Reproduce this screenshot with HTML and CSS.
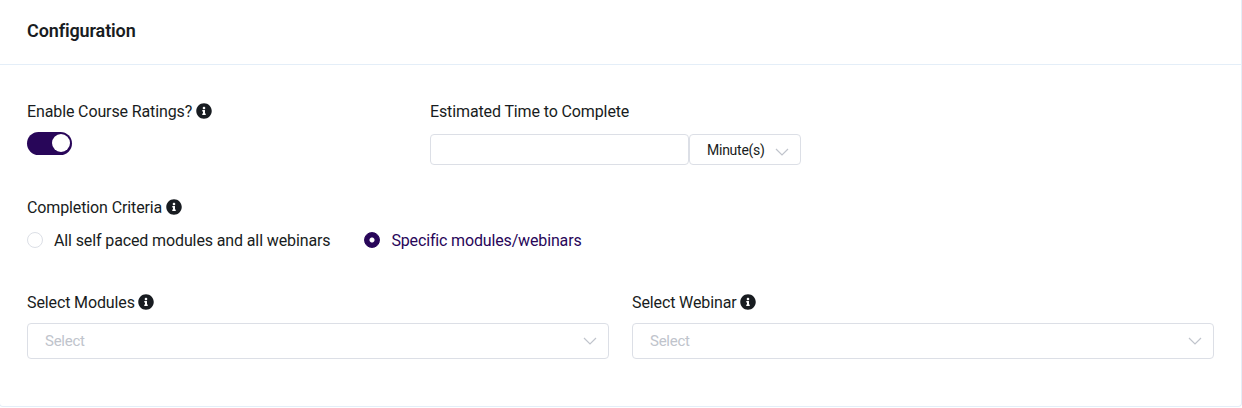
FILE: index.html
```html
<!DOCTYPE html>
<html lang="en">
<head>
  <meta charset="UTF-8">
  <meta name="viewport" content="width=device-width, initial-scale=1.0">
  <title>Configuration</title>
  <link rel="stylesheet" href="styles.css">
</head>
<body>
  <svg class="sprite">
    <symbol id="info" viewBox="0 0 512 512">
      <path d="M256 8C119.043 8 8 119.083 8 256c0 136.997 111.043 248 248 248s248-111.003 248-248C504 119.083 392.957 8 256 8zm0 110c23.196 0 42 18.804 42 42s-18.804 42-42 42-42-18.804-42-42 18.804-42 42-42zm56 254c0 6.627-5.373 12-12 12h-88c-6.627 0-12-5.373-12-12v-24c0-6.627 5.373-12 12-12h12v-64h-12c-6.627 0-12-5.373-12-12v-24c0-6.627 5.373-12 12-12h64c6.627 0 12 5.373 12 12v100h12c6.627 0 12 5.373 12 12v24z"/>
    </symbol>
    <symbol id="arrow" viewBox="0 0 14 8">
      <path d="M1 1l6 6 6-6" fill="none" stroke="currentColor" stroke-width="1.2"/>
    </symbol>
  </svg>

  <div class="card">
    <div class="card-header">
      <h2>Configuration</h2>
    </div>

    <div class="card-body">
      <div class="row row-top">
        <div class="col-ratings">
          <div class="label">Enable Course Ratings? <svg class="info"><use href="#info"/></svg></div>
          <div class="switch" role="switch" aria-checked="true"><span class="knob"></span></div>
        </div>
        <div>
          <div class="label">Estimated Time to Complete</div>
          <div class="time-group">
            <input type="text" class="time-input">
            <div class="select select-unit">
              <span>Minute(s)</span>
              <svg class="arrow"><use href="#arrow"/></svg>
            </div>
          </div>
        </div>
      </div>

      <div class="criteria">
        <div class="label">Completion Criteria <svg class="info"><use href="#info"/></svg></div>
        <div class="radio-group">
          <div class="radio"><span class="dot"></span>All self paced modules and all webinars</div>
          <div class="radio checked"><span class="dot"></span>Specific modules/webinars</div>
        </div>
      </div>

      <div class="row row-selects">
        <div class="col">
          <div class="label">Select Modules <svg class="info"><use href="#info"/></svg></div>
          <div class="select">
            <span class="placeholder">Select</span>
            <svg class="arrow"><use href="#arrow"/></svg>
          </div>
        </div>
        <div class="col">
          <div class="label">Select Webinar <svg class="info"><use href="#info"/></svg></div>
          <div class="select">
            <span class="placeholder">Select</span>
            <svg class="arrow"><use href="#arrow"/></svg>
          </div>
        </div>
      </div>
    </div>
  </div>
</body>
</html>
```
FILE: styles.css
```css
* {
  box-sizing: border-box;
}

body {
  margin: 0;
  background: #fff;
  color: #181c21;
  font-family: Roboto, sans-serif;
  font-size: 16px;
  line-height: 24px;
  letter-spacing: -0.12px;
  overflow: hidden;
}

.sprite {
  display: none;
}

.card {
  height: 407px;
  margin-left: -1px;
  border: 1px solid #e4eef8;
  border-top: none;
  border-radius: 0 0 4px 4px;
}

.card-header {
  height: 65px;
  padding: 19px 27px 0;
  border-bottom: 1px solid #e4eef8;
}

.card-header h2 {
  margin: 0;
  font-size: 18px;
  font-weight: 600;
  line-height: 24px;
}

.card-body {
  padding: 34px 27px 0;
}

.row {
  display: flex;
}

.row-top {
  height: 96px;
}

.col-ratings {
  width: 403px;
}

.label {
  display: flex;
  align-items: center;
  gap: 4px;
  height: 24px;
  padding-top: 2px;
}

.info {
  width: 16px;
  height: 16px;
  margin-bottom: 2px;
  fill: #181c21;
}

.row-selects .label {
  gap: 3.4px;
}

.switch {
  display: flex;
  justify-content: flex-end;
  width: 45px;
  height: 23px;
  margin-top: 9px;
  padding: 2px;
  border-radius: 12px;
  background: #280659;
}

.knob {
  width: 18px;
  height: 18px;
  border-radius: 50%;
  background: #fff;
}

.time-group {
  display: flex;
  margin-top: 11px;
}

.time-input {
  width: 259px;
  height: 31px;
  padding: 0 15px;
  border: 1px solid #dcdfe6;
  border-radius: 4px;
  font: inherit;
}

.select {
  display: flex;
  align-items: center;
  justify-content: space-between;
  height: 36px;
  padding: 0 11px 0 17px;
  border: 1px solid #dcdfe6;
  border-radius: 4px;
  font-size: 15px;
}

.select-unit {
  width: 112px;
  height: 31px;
  font-size: 14px;
  letter-spacing: -0.25px;
}

.select-unit .arrow {
  margin-top: 5px;
}

.placeholder {
  color: #c0c4cc;
  letter-spacing: -0.25px;
}

.arrow {
  width: 14px;
  height: 8px;
  color: #c0c4cc;
}

.criteria {
  height: 95px;
}

.radio-group {
  display: flex;
  gap: 34px;
  margin-top: 9px;
}

.radio {
  display: flex;
  align-items: center;
  gap: 11px;
  height: 24px;
  padding-top: 2px;
}

.dot {
  width: 16px;
  height: 16px;
  margin-bottom: 2px;
  border: 1px solid #dcdfe6;
  border-radius: 50%;
}

.radio.checked {
  color: #280659;
  letter-spacing: -0.15px;
}

.radio.checked .dot {
  border-color: #280659;
  background: radial-gradient(circle, #fff 2px, #280659 3px);
}

.row-selects {
  gap: 23px;
}

.col {
  flex: 1;
}

.col .select {
  margin-top: 9px;
}
```
